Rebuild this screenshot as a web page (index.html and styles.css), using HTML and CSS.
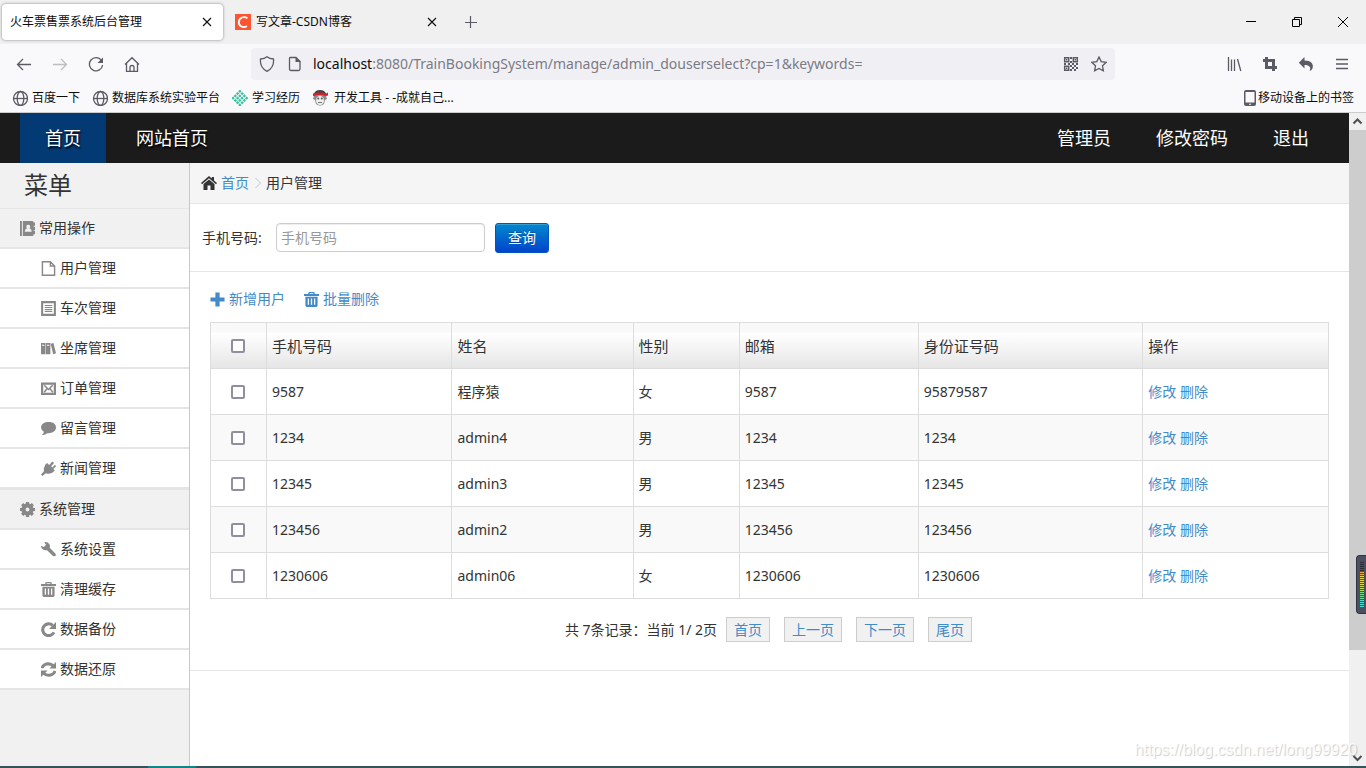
FILE: index.html
```html
<!DOCTYPE html>
<html lang="zh-CN">
<head>
<meta charset="utf-8">
<title>火车票售票系统后台管理</title>
<link rel="stylesheet" href="styles.css">
</head>
<body>
<svg class="defs" aria-hidden="true">
  <symbol id="globe" viewBox="0 0 16 16"><g fill="none" stroke="currentColor" stroke-width="1.3"><circle cx="8.500" cy="8.500" r="7"/><ellipse cx="8.500" cy="8.500" rx="3.300" ry="7"/><path d="M1.500 8.500h14"/></g></symbol>
  <symbol id="close" viewBox="0 0 10 10"><path d="M1 1l8 8M9 1L1 9" fill="none" stroke="currentColor" stroke-width="1.1"/></symbol>
  <symbol id="trash" viewBox="0 0 16 16"><path fill="currentColor" fill-rule="evenodd" d="M4.500 2V1.200Q4.500 0 6 0H10Q11.500 0 11.500 1.200V2H16V4.300H0V2ZM6 2H10V1.300H6ZM1.500 5H14.500V14.500Q14.500 16 13 16H3Q1.500 16 1.500 14.500ZM4 6.800V13.500H5.300V6.800ZM7.300 6.800V13.500H8.700V6.800ZM10.700 6.800V13.500H12V6.800Z"/></symbol>
</svg>

<header class="browser">
  <div class="tabs">
    <div class="tab tab-active"><span class="tab-title">火车票售票系统后台管理</span><button class="tab-close" aria-label="关闭标签页"><svg class="i10"><use href="#close"/></svg></button></div>
    <div class="tab"><svg class="i16" viewBox="0 0 16 16"><path fill="#fc5531" d="M0 0h16v16H0z"/><path d="M12.500 4.200C9 1.800 4 3.500 3.800 8.200C3.800 12.500 8 14 12 12.200" fill="none" stroke="#fff" stroke-width="1.800"/></svg><span class="tab-title">写文章-CSDN博客</span><button class="tab-close" aria-label="关闭标签页"><svg class="i10"><use href="#close"/></svg></button></div>
    <button class="new-tab" aria-label="新建标签页"><svg class="i12" viewBox="0 0 12 12"><path d="M5.500 0v12M0 6.500h12" stroke="currentColor" stroke-width="1.200"/></svg></button>
    <div class="window-buttons">
      <button aria-label="最小化"><svg class="i12" viewBox="0 0 12 12"><path d="M1 5.500h10" stroke="currentColor"/></svg></button>
      <button aria-label="还原"><svg class="i12" viewBox="0 0 12 12"><path d="M1.500 3.500h7v7h-7zM3.500 3.500v-2h7v7h-2" fill="none" stroke="currentColor"/></svg></button>
      <button aria-label="关闭"><svg class="i12" viewBox="0 0 12 12"><path d="M1 1l10 10M11 1L1 11" stroke="currentColor"/></svg></button>
    </div>
  </div>

  <div class="toolbar">
    <div class="nav-buttons">
      <button aria-label="后退"><svg class="i16" viewBox="0 0 16 16"><path d="M15 8.500H1.500M7 3L1.500 8.500 7 14" class="line"/></svg></button>
      <button aria-label="前进" disabled><svg class="i16" viewBox="0 0 16 16"><path d="M1 8.500h13.500M9 3l5.500 5.500L9 14" class="line"/></svg></button>
      <button aria-label="刷新"><svg class="i16" viewBox="0 0 16 16"><path d="M13.500 4.500A6.600 6.600 0 1 0 14.600 9" class="line"/><path d="M15 1.500V7H9.500z" fill="currentColor"/></svg></button>
      <button aria-label="主页"><svg class="i16" viewBox="0 0 16 16"><path d="M1 8.500L8 1.700l7 6.800M2.500 7.500v7.800h11V7.500M6 15v-4q0-1.500 2-1.500T10 11v4" class="line"/></svg></button>
    </div>
    <div class="urlbar">
      <svg class="i16" viewBox="0 0 16 16"><path d="M8 .8Q10.500 2.800 14.500 3C15 8 13 13 8 15.300C3 13 1 8 1.500 3Q5.500 2.800 8 .8Z" class="line"/></svg>
      <svg class="i16 page-icon" viewBox="0 0 16 16"><path d="M3 1.500h6l4 4V13q0 1.500-1.500 1.500H4Q2.500 14.500 2.500 13V2.500Q2.500 1.500 3 1.500Z" class="line"/><path d="M8.500 1v5H14z" fill="currentColor"/></svg>
      <div class="url" role="textbox" aria-label="地址栏"><b>localhost</b>:8080/TrainBookingSystem/manage/admin_douserselect?cp=1&amp;keywords=</div>
      <button aria-label="二维码"><svg class="i16" viewBox="0 0 16 16"><path d="M1.700 1.700h4v4h-4zM10.300 1.700h4v4h-4zM1.700 10.300h4v4h-4z" fill="none" stroke="currentColor" stroke-width="1.500"/><path fill="currentColor" d="M3 3h1.400v1.400H3zM11.600 3H13v1.400h-1.400zM3 11.600h1.400V13H3zM7 1h2v2H7zM7 5h2v2H7zM1 7h2v2H1zM5 7h2v2H5zM9 7h2v2H9zM13 7h2v2h-2zM7 9h2v2H7zM11 9h2v2h-2zM9 11h2v2H9zM13 11h2v2h-2zM7 13h2v2H7zM11 13h2v2h-2z"/></svg></button>
      <button aria-label="添加书签"><svg class="i16" viewBox="0 0 16 16"><path d="M8 1l2.200 4.600 5 .7-3.700 3.500.9 5L8 12.400l-4.400 2.400.9-5L.8 6.300l5-.7z" class="line"/></svg></button>
    </div>
    <div class="tool-buttons">
      <button aria-label="书签库"><svg class="i16" viewBox="0 0 16 16"><path d="M2.500 1v14M5.500 3.500V15M8.500 3.500V15M11.500 3l3.300 12" class="line"/></svg></button>
      <button aria-label="截图"><svg class="i16" viewBox="0 0 16 16"><path d="M4.500 1v10.500H15M1 4.500h10.500V15" fill="none" stroke="currentColor" stroke-width="3"/></svg></button>
      <button aria-label="撤销"><svg class="i16" viewBox="0 0 16 16"><path fill="currentColor" d="M6.500 1v3.500C13 4.500 16 8 14.500 12.500Q13.500 14.500 11.500 15C13.500 11.500 11.500 9 6.500 9v3.500L.8 6.700z"/></svg></button>
      <button aria-label="菜单"><svg class="i16" viewBox="0 0 16 16"><path d="M2 3.500h12M2 8h12M2 12.500h12" class="line"/></svg></button>
    </div>
  </div>

  <nav class="bookmarks" aria-label="书签">
    <a href="#"><svg class="i16"><use href="#globe"/></svg>百度一下</a>
    <a href="#"><svg class="i16"><use href="#globe"/></svg>数据库系统实验平台</a>
    <a href="#"><svg class="i16" viewBox="0 0 16 16"><path transform="rotate(45 8 8)" d="M3.200 2.200v12M6.400 2.200v12M9.600 2.200v12M12.800 2.200v12" stroke="#3bbf9d" stroke-width="2.400" stroke-dasharray="2.400 .8"/></svg>学习经历</a>
    <a href="#" class="bookmark-wide"><svg class="i16" viewBox="0 0 16 16"><path fill="#8a8a8a" d="M2 6h12l1 3-2 1-1 4q-4 3-8 0L3 10 1 9z"/><path fill="#444" d="M2 4Q3 0 8 0t6 4z"/><ellipse cx="8" cy="10.500" rx="4" ry="4.500" fill="#eee"/><path fill="#d3202b" d="M1 3.500q7-2 13 0l2-1v3l-2 .5q-6-1-13 0z"/><circle cx="6.200" cy="8.500" r="1" fill="#555"/><circle cx="9.800" cy="8.500" r="1" fill="#555"/><path d="M6 12.500h4" stroke="#777"/></svg>开发工具 - -成就自己...</a>
    <a href="#" class="bookmark-mobile"><svg class="i12 phone" viewBox="0 0 12 16"><path fill="currentColor" fill-rule="evenodd" d="M2 0h8q2 0 2 2v12q0 2-2 2H2q-2 0-2-2V2Q0 0 2 0zM1.500 2v10.500h9V2zM5 13.700v1h2v-1z"/></svg>移动设备上的书签</a>
  </nav>
</header>

<div class="viewport">
  <div class="app">
    <nav class="topnav" aria-label="主导航">
      <a href="#" class="top-link current">首页</a>
      <a href="#" class="top-link site-home">网站首页</a>
      <div class="account"><a href="#">管理员</a><a href="#">修改密码</a><a href="#">退出</a></div>
    </nav>
    <div class="columns">
      <aside class="sidebar">
        <h2 class="menu-title">菜单</h2>
        <section class="menu-group">
          <h3 class="menu-head"><svg class="i16" viewBox="0 0 16 16"><path fill="currentColor" fill-rule="evenodd" d="M0 0h2v16H0zM3 0h10q1.500 0 1.500 1.500H16V5h-1.500v1H16v3.500h-1.500v1H16V14h-1.500q0 2-1.500 2H3zM8.800 4a2 2 0 0 0-1.300 3.600Q5 8.500 5 11.500h7.500Q12.500 8.500 10.100 7.600A2 2 0 0 0 8.800 4z"/></svg>常用操作</h3>
          <a href="#" class="menu-item"><svg class="i16" viewBox="0 0 16 16"><path d="M1.500 .8h8.500L14.500 5.300V15.200H1.500zM10 .8v4.500h4.500" fill="none" stroke="currentColor" stroke-width="1.500"/></svg>用户管理</a>
          <a href="#" class="menu-item"><svg class="i16" viewBox="0 0 16 16"><path d="M1.200 1.200h13.600v13.600H1.200z" fill="none" stroke="currentColor" stroke-width="2.200"/><path d="M4 4.800h8M4 6.900h8M4 9h8M4 11.100h8" stroke="currentColor" stroke-width="1.200"/></svg>车次管理</a>
          <a href="#" class="menu-item"><svg class="i16" viewBox="0 0 16 16"><path fill="currentColor" fill-rule="evenodd" d="M0 2h4.800v12H0zM1 4v1h2.500V4zM5.300 2h4.700v12H5.300zM6.300 4v1h2.500V4zM10.300 3l3-1L16 13l-3 1z"/></svg>坐席管理</a>
          <a href="#" class="menu-item"><svg class="i16" viewBox="0 0 16 16"><path d="M1.200 2.700h13.600v11H1.200z" fill="none" stroke="currentColor" stroke-width="2.400"/><path d="M3.500 4.500L8 9l4.500-4.500M3.500 12l3-4M12.500 12l-3-4" fill="none" stroke="currentColor" stroke-width="1.600"/></svg>订单管理</a>
          <a href="#" class="menu-item"><svg class="i16" viewBox="0 0 16 16"><path fill="currentColor" d="M8.500 1C3.500 1 0 3 0 7.200Q.2 9.900 3 11.500Q3 13.500 1 14.800Q4.500 15.300 6.500 13C12 13.500 16 10.800 16 7S13 1 8.500 1z"/></svg>留言管理</a>
          <a href="#" class="menu-item"><svg class="i16" viewBox="0 0 16 16"><path fill="currentColor" d="M4.500 4l2-2 2.300 2.300L12 .5 14 2l-3.200 3.500L12.200 7 15 4l1 1.500-2.800 3 1.500 1.700q-4 5-9.500 2.800L1.500 16 0 14.500 3 11.200Q2.500 7.500 4.500 4z"/></svg>新闻管理</a>
        </section>
        <section class="menu-group">
          <h3 class="menu-head"><svg class="i16" viewBox="0 0 16 16"><circle cx="8" cy="8" r="4.300" fill="none" stroke="currentColor" stroke-width="4.500"/><path d="M8 0v4M8 12v4M0 8h4M12 8h4M2.300 2.300l3 3M10.700 10.700l3 3M2.300 13.700l3-3M10.700 5.300l3-3" stroke="currentColor" stroke-width="3.400"/></svg>系统管理</h3>
          <a href="#" class="menu-item"><svg class="i16" viewBox="0 0 16 16"><path fill="currentColor" d="M3.500.3Q7-.6 9 2.500q1 1.700.3 3.700l6.200 6.300q.8 1.200-.2 2.300-1.200 1-2.500 0L6.500 8.800Q2.500 9.500.5 6.500L0 4l3 1.200L5.300 3z"/></svg>系统设置</a>
          <a href="#" class="menu-item"><svg class="i16"><use href="#trash"/></svg>清理缓存</a>
          <a href="#" class="menu-item"><svg class="i16" viewBox="0 0 16 16"><path d="M12.500 3.700A6.300 6.300 0 1 0 13.800 11" fill="none" stroke="currentColor" stroke-width="3.300"/><path d="M16 0v7.500H8.500z" fill="currentColor"/></svg>数据备份</a>
          <a href="#" class="menu-item"><svg class="i16" viewBox="0 0 16 16"><path d="M1 6.500Q2.500 2 8 1.800 11 2 13 4M15 9.500Q13.500 14 8 14.200 5 14 3 12" fill="none" stroke="currentColor" stroke-width="3.200"/><path d="M16 0v7H9zM0 16V9h7z" fill="currentColor"/></svg>数据还原</a>
        </section>
      </aside>

      <main class="content">
        <div class="breadcrumb">
          <svg class="i16" viewBox="0 0 16 16"><path fill="currentColor" d="M0 8L8 1l2.800 2.400V2H13v3.400L16 8l-1 1.200-7-6-7 6zM2.500 9L8 4.500 13.500 9v6h-4v-4.500h-3V15h-4z"/></svg>
          <a href="#">首页</a>
          <svg class="chevron" viewBox="0 0 6 12"><path d="M.5 1l5 5-5 5" fill="none" stroke="currentColor"/></svg>
          <span>用户管理</span>
        </div>
        <form class="search">
          <label for="phone">手机号码:</label>
          <input id="phone" class="search-input" type="text" placeholder="手机号码">
          <button type="button" class="search-button">查询</button>
        </form>
        <section class="list">
          <div class="actions">
            <a href="#"><svg class="i16" viewBox="0 0 16 16"><path d="M8 .5v15M.5 8h15" stroke="currentColor" stroke-width="4.500"/></svg>新增用户</a>
            <a href="#"><svg class="i16"><use href="#trash"/></svg>批量删除</a>
          </div>
          <table class="users">
            <colgroup><col class="c-check"><col class="c-phone"><col class="c-name"><col class="c-sex"><col class="c-mail"><col class="c-id"><col></colgroup>
            <thead><tr><th><input type="checkbox" aria-label="全选"></th><th>手机号码</th><th>姓名</th><th>性别</th><th>邮箱</th><th>身份证号码</th><th>操作</th></tr></thead>
            <tbody>
              <tr><td><input type="checkbox" aria-label="选择 9587"></td><td>9587</td><td>程序猿</td><td>女</td><td>9587</td><td>95879587</td><td><a href="#">修改</a> <a href="#">删除</a></td></tr>
              <tr><td><input type="checkbox" aria-label="选择 1234"></td><td>1234</td><td>admin4</td><td>男</td><td>1234</td><td>1234</td><td><a href="#">修改</a> <a href="#">删除</a></td></tr>
              <tr><td><input type="checkbox" aria-label="选择 12345"></td><td>12345</td><td>admin3</td><td>男</td><td>12345</td><td>12345</td><td><a href="#">修改</a> <a href="#">删除</a></td></tr>
              <tr><td><input type="checkbox" aria-label="选择 123456"></td><td>123456</td><td>admin2</td><td>男</td><td>123456</td><td>123456</td><td><a href="#">修改</a> <a href="#">删除</a></td></tr>
              <tr><td><input type="checkbox" aria-label="选择 1230606"></td><td>1230606</td><td>admin06</td><td>女</td><td>1230606</td><td>1230606</td><td><a href="#">修改</a> <a href="#">删除</a></td></tr>
            </tbody>
          </table>
          <div class="pager">
            <span class="pager-text">共 7条记录：当前 1/ 2页</span>
            <a href="#">首页</a><a href="#">上一页</a><a href="#">下一页</a><a href="#">尾页</a>
          </div>
        </section>
      </main>
    </div>
  </div>
  <div class="scrollbar" aria-hidden="true">
    <svg class="arrow" viewBox="0 0 17 17"><path d="M4.500 10.500l4-4 4 4" fill="none" stroke="#505050" stroke-width="2"/></svg>
    <div class="track"><div class="thumb"></div></div>
    <svg class="arrow" viewBox="0 0 17 17"><path d="M4.500 7l4 4 4-4" fill="none" stroke="#505050" stroke-width="2"/></svg>
  </div>
  <div class="meter" aria-hidden="true">
    <svg class="meter-bars" viewBox="0 0 4 46"><g fill="none" stroke-width="4" stroke-dasharray="1 1"><path d="M2 0v10" stroke="#2c2f3a"/><path d="M2 10v4" stroke="#f0a63c"/><path d="M2 14v10" stroke="#e6d53c"/><path d="M2 24v6" stroke="#b4dc50"/><path d="M2 30v8" stroke="#78dc8c"/><path d="M2 38v8" stroke="#40e0d0"/></g></svg>
  </div>
  <div class="watermark">https://blog.csdn.net/long99920</div>
</div>
<footer class="taskbar"><div class="task-active"></div></footer>
</body>
</html>
```
FILE: styles.css
```css
* { box-sizing: border-box; }
body {
  margin: 0;
  height: 100vh;
  display: flex;
  flex-direction: column;
  overflow: hidden;
  background: #fff;
  color: #333;
  font: 14px/20px "Noto Sans", "Noto Sans CJK SC", sans-serif;
}
a { color: #428bca; text-decoration: none; }
h2, h3 { margin: 0; font-weight: normal; }
svg { display: block; flex: none; }
button { font: inherit; color: inherit; background: none; border: 0; padding: 0; }
.defs { position: absolute; width: 0; height: 0; }
.i10 { width: 10px; height: 10px; }
.i12 { width: 12px; height: 12px; }
.i16 { width: 16px; height: 16px; }
.line { fill: none; stroke: currentColor; stroke-width: 1.3; }

/* browser frame */
.browser { flex: none; background: #f9f9fb; border-bottom: 1px solid #ccc; color: #0c0c0d; font-size: 12px; }
.tabs { display: flex; align-items: center; height: 44px; padding: 0 8px 0 2px; gap: 4px; background: #f0f0f0; }
.tab { display: flex; align-items: center; gap: 5px; width: 221px; height: 36px; padding: 0 11px 0 8px; }
.tab-active { background: #fff; border-radius: 4px; box-shadow: 0 0 3px rgba(0, 0, 0, .45); }
.tab-title { flex: 1; white-space: nowrap; }
.new-tab { margin-left: 13px; color: #5b5b66; }
.window-buttons { display: flex; gap: 34px; margin-left: auto; padding-right: 9px; color: #000; }
.toolbar { display: flex; align-items: center; height: 40px; padding: 0 16px; color: #5b5b66; }
.nav-buttons { display: flex; gap: 20px; width: 235px; }
.nav-buttons button:disabled { color: #bdbdc3; }
.urlbar { flex: 1; display: flex; align-items: center; gap: 12px; height: 32px; padding: 0 8px; border-radius: 4px; background: #f0f0f4; }
.url { flex: 1; color: #7b7b84; font-size: 14px; white-space: nowrap; }
.page-icon { margin-right: -2px; }
.url b { font-weight: normal; color: #0c0c0d; }
.tool-buttons { display: flex; justify-content: space-between; width: 124px; margin-left: 111px; }
.bookmarks { display: flex; gap: 12px; height: 28px; padding: 0 12px; align-items: center; color: #5b5b66; }
.bookmarks a { display: flex; align-items: center; gap: 4px; color: #0c0c0d; white-space: nowrap; }
.bookmarks svg { color: #5b5b66; }
.bookmarks .bookmark-wide { gap: 6px; }
.bookmarks .bookmark-mobile { gap: 2px; margin-left: auto; }
.phone { height: 16px; }

/* page */
.viewport { flex: 1; min-height: 0; display: flex; position: relative; }
.app { flex: 1; min-width: 0; display: flex; flex-direction: column; }
.topnav { flex: none; display: flex; height: 50px; padding: 0 40px 0 20px; background: #1b1b1b; font-size: 18px; line-height: 50px; }
.topnav a { color: #fff; }
.top-link { padding: 0 25px; text-shadow: 1px 2px 2px #000; }
.top-link.current { background: #043a73; }
.top-link.site-home { padding: 0 30px; }
.account { display: flex; gap: 45px; margin-left: auto; }
.columns { flex: 1; min-height: 0; display: flex; }

.sidebar { flex: none; width: 190px; background: #f1f1f1; border-right: 1px solid #c8c8c8; }
.menu-title { height: 46px; padding-left: 24px; border-bottom: 1px solid #e5e5e5; font-size: 24px; line-height: 44px; }
.menu-group + .menu-group { border-top: 1px solid #e5e5e5; }
.menu-head, .menu-item { display: flex; align-items: center; gap: 4px; height: 40px; border-bottom: 2px solid #e5e5e5; color: #333; font-size: 14px; }
.menu-head { padding-left: 20px; }
.menu-item { padding-left: 41px; background: #fff; }
.menu-head svg, .menu-item svg { width: 15px; height: 15px; color: #888; }

.content { flex: 1; min-width: 0; }
.breadcrumb { display: flex; align-items: center; gap: 4px; height: 41px; padding-left: 11px; background: #f5f5f5; border-bottom: 1px solid #e5e5e5; }
.chevron { width: 6px; height: 12px; margin: 0 1px 0 2px; color: #b8c4e0; }
.search { display: flex; align-items: center; height: 68px; padding-left: 12px; border-bottom: 1px solid #e5e5e5; }
.search label { width: 74px; }
.search-input { width: 209px; height: 29px; margin-right: 10px; padding: 0 4px; border: 1px solid #ccc; border-radius: 4px; box-shadow: inset 0 1px 1px rgba(0, 0, 0, .075); font: inherit; }
.search-input::placeholder { color: #999; }
.search-button { width: 54px; height: 30px; border: 1px solid #0055bb; border-radius: 3px; background: linear-gradient(#0088cc, #0044cc); box-shadow: inset 0 1px 0 rgba(255, 255, 255, .2); color: #fff; text-shadow: 0 -1px 0 rgba(0, 0, 0, .25); line-height: 28px; }

.list { padding: 17px 20px 28px; border-bottom: 1px solid #e5e5e5; }
.actions { display: flex; gap: 19px; height: 20px; margin-bottom: 13px; }
.actions a { display: flex; align-items: center; gap: 4px; }
.actions svg { width: 15px; height: 15px; }
.users { width: 100%; table-layout: fixed; border-collapse: collapse; }
.c-check { width: 5%; }
.c-phone { width: 16.6%; }
.c-name { width: 16.2%; }
.c-sex { width: 9.5%; }
.c-mail { width: 16%; }
.c-id { width: 20.1%; }
.users th, .users td { height: 46px; padding: 0 5px; border: 1px solid #ddd; text-align: left; }
.users th { font-size: 15px; font-weight: normal; }
.users thead tr { background: linear-gradient(#f9f9f9 0, #f9f9f9 9px, #fff 10px, #e5e5e5 100%); }
.users tbody tr:nth-child(even) { background: #f9f9f9; }
.users th:first-child, .users td:first-child { text-align: center; line-height: 16px; }
.users input { appearance: none; display: block; width: 14px; height: 14px; margin: 0 auto; border: 2px solid #8f8f9d; border-radius: 2px; background: #fff; }
.pager { display: flex; justify-content: center; align-items: center; gap: 14px; margin-top: 18px; padding-right: 2px; }
.pager-text { margin-right: -5px; }
.pager a { height: 25px; padding: 0 7px; border: 1px solid #ccc; background: #f1f1f1; line-height: 23px; }

/* overlays and frame edges */
.scrollbar { flex: none; width: 17px; display: flex; flex-direction: column; background: #f0f0f0; }
.arrow { width: 17px; height: 17px; }
.track { flex: 1; }
.thumb { height: 84%; background: #cdcdcd; }
.meter { position: absolute; right: 0; top: 442px; width: 10px; height: 59px; padding: 6px 2px 5px 3px; border: 1px solid #30343f; border-right: 0; border-radius: 4px 0 0 4px; background: #4a5060; }
.meter-bars { width: 4px; height: 46px; }
.watermark { position: absolute; right: 9px; bottom: 6px; color: rgba(255, 255, 255, .8); text-shadow: 1px 1px 1px rgba(0, 0, 0, .2); font: 16px/20px "Liberation Sans", Arial, sans-serif; }
.taskbar { flex: none; height: 2px; padding-left: 148px; background: #35545a; }
.task-active { width: 48px; height: 2px; background: #128488; }
```
